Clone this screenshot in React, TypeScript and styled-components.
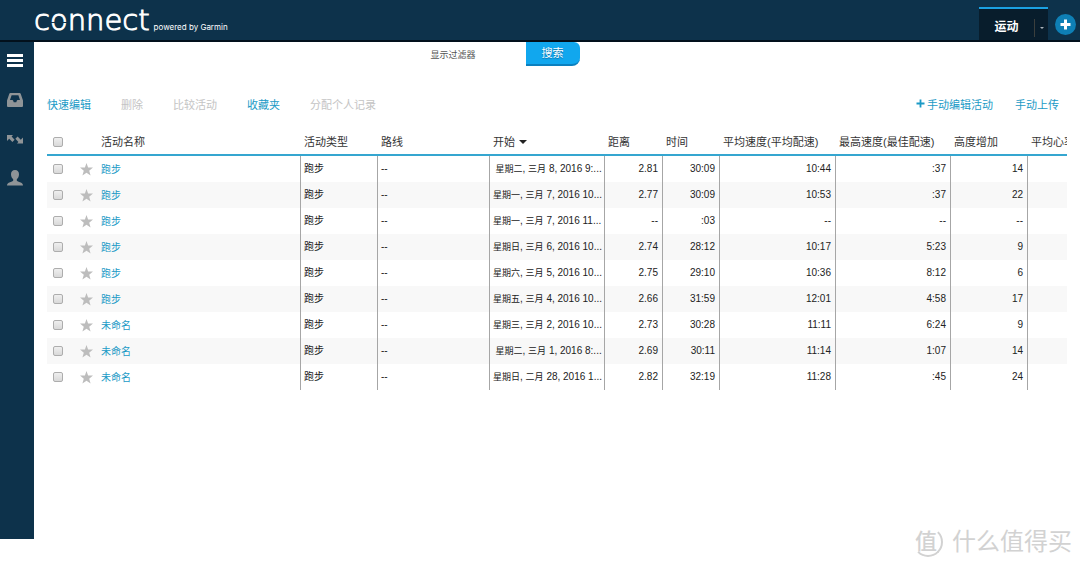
import React from 'react';
import styled, { createGlobalStyle } from 'styled-components';

const sans = '"Liberation Sans", "Noto Sans CJK SC", sans-serif';

const GlobalStyle = createGlobalStyle`
  *, *::before, *::after { box-sizing: border-box; }
  body { margin: 0; background: #fff; font-family: ${sans}; color: #222; }
  button, input { font-family: inherit; margin: 0; }
`;

const Page = styled.div`
  position: relative;
  min-height: 100vh;
  display: flex;
  flex-direction: column;
  padding-bottom: 28px;
  overflow: hidden;
`;

const TopBar = styled.header`
  display: flex;
  justify-content: space-between;
  height: 42px;
  padding: 0 4px 0 34px;
  background: #0d324b;
  border-bottom: 2px solid #02101c;
`;

const Brand = styled.a`
  display: flex;
  align-items: baseline;
  gap: 4px;
  color: #fff;
  text-decoration: none;
`;

const Wordmark = styled.span`
  position: relative;
  font: 200 29px/40px "DejaVu Sans", sans-serif;
  -webkit-text-stroke: 1px #fff;

  /* the break that splits the "o" into two arcs */
  &::after {
    content: '';
    position: absolute;
    left: 16px;
    top: 22px;
    width: 18px;
    height: 1px;
    background: #0d324b;
  }
`;

const Tagline = styled.span`
  font: 8px/12px Inter, sans-serif;
`;

const TopActions = styled.nav`
  display: flex;
  align-items: flex-end;
  gap: 7px;
`;

const Tab = styled.div`
  display: flex;
  align-items: center;
  height: 33px;
  border-top: 2px solid #1ba1e2;
  background: #081d2c;
`;

const TabButton = styled.button`
  width: 55px;
  border: 0;
  padding: 4px 0 0;
  background: none;
  color: #fff;
  font-size: 12px;
  font-weight: 700;
  line-height: 18px;
`;

const TabMenu = styled.button`
  width: 14px;
  height: 18px;
  margin-top: 6px;
  border: 0;
  border-left: 1px solid #3b3f3d;
  padding: 0;
  display: grid;
  place-items: center;
  background: none;
`;

const AddButton = styled.button`
  width: 21px;
  height: 21px;
  margin-bottom: 5px;
  border: 0;
  border-radius: 50%;
  padding: 0;
  display: grid;
  place-items: center;
  background: #0e7fb5;
`;

const Body = styled.div`
  flex: 1;
  display: flex;
`;

const Sidebar = styled.nav`
  flex: none;
  width: 34px;
  display: flex;
  flex-direction: column;
  align-items: center;
  gap: 15px;
  padding: 7px 4px 0 0;
  background: #0d324b;
`;

const SideButton = styled.button`
  width: 24px;
  height: 24px;
  border: 0;
  padding: 0;
  display: grid;
  place-items: center;
  background: none;
`;

const Main = styled.main`
  flex: 1;
  min-width: 0;
  padding: 0 13px;
`;

const SearchRow = styled.div`
  display: flex;
  justify-content: center;
  align-items: flex-start;
  gap: 50px;
  padding-right: 104px;
`;

const FilterToggle = styled.button`
  border: 0;
  padding: 0;
  background: none;
  color: #555;
  font-size: 9px;
  line-height: 26px;
`;

const SearchButton = styled.button`
  width: 54px;
  height: 24px;
  border: 0;
  border-bottom: 2px solid #0b80bf;
  border-radius: 0 6px 8px 0;
  padding: 0;
  background: #11a7ee;
  color: #fff;
  font-size: 11px;
  line-height: 22px;
  text-shadow: 0 1px 1px #0b6fa6;
`;

const Toolbar = styled.div`
  display: flex;
  justify-content: space-between;
  margin-top: 28px;
  padding-right: 8px;
`;

const ToolGroup = styled.div<{ $gap: number }>`
  display: flex;
  gap: ${(p) => p.$gap}px;
`;

const ToolButton = styled.button`
  display: flex;
  align-items: center;
  gap: 2px;
  border: 0;
  padding: 0;
  background: none;
  color: #1b9ac6;
  font-size: 11px;
  line-height: 18px;
  &:disabled { color: #c4c4c4; }
`;

const Table = styled.table`
  width: 100%;
  margin-top: 15px;
  border-collapse: separate;
  border-spacing: 0;
  table-layout: fixed;
`;

const Col = styled.col<{ $width?: number }>`
  width: ${(p) => (p.$width ? `${p.$width}px` : 'auto')};
`;

const HeadCell = styled.th`
  height: 27px;
  padding: 0 0 0 3px;
  border-bottom: 2px solid #35a6d0;
  overflow: hidden;
  color: #333;
  font-size: 11px;
  font-weight: 400;
  line-height: 22px;
  text-align: left;
  white-space: nowrap;
`;

const SortButton = styled.button`
  display: flex;
  align-items: center;
  gap: 4px;
  border: 0;
  padding: 0;
  background: none;
  color: inherit;
  font-size: 11px;
  line-height: 22px;
`;

const Row = styled.tr`
  &:nth-child(even) { background: #f8f8f8; }
`;

const Cell = styled.td<{ $align?: 'left' | 'right'; $ruled?: boolean }>`
  height: 26px;
  padding: 0 4px 0 3px;
  border-right: ${(p) => (p.$ruled === false ? '0' : '1px solid #a6a6a6')};
  overflow: hidden;
  font-size: 10px;
  line-height: 26px;
  text-align: ${(p) => p.$align ?? 'left'};
  white-space: nowrap;
`;

const DateCell = styled(Cell)`
  padding-right: 0;
`;

const DateWord = styled.span`
  font-size: 9px;
`;

const NameLink = styled.a`
  position: relative;
  top: 1px;
  color: #1b9ac6;
  text-decoration: none;
`;

const Check = styled.input`
  appearance: none;
  display: block;
  width: 10px;
  height: 10px;
  margin-left: 3px;
  border: 1px solid #adadad;
  border-radius: 2px;
  background: linear-gradient(#efefef, #d9d9d9);
  &:checked { background: #1b9ac6; }
`;

const StarButton = styled.button`
  display: block;
  border: 0;
  padding: 0;
  background: none;
  line-height: 0;
`;

const Watermark = styled.div`
  position: absolute;
  right: 8px;
  bottom: 8px;
  display: flex;
  align-items: center;
  gap: 9px;
  color: #d2d2d2;
  font-size: 24px;
  line-height: 34px;
`;

const Seal = styled.span`
  width: 30px;
  height: 30px;
  display: grid;
  align-items: center;
  justify-items: start;
  border: 2px solid #d2d2d2;
  border-color: transparent #d2d2d2 #d2d2d2 transparent;
  border-radius: 50%;
  font-size: 22px;
  font-weight: 500;
  line-height: 26px;
`;

const Star = () => (
  <svg width="13" height="13" viewBox="0 0 13 13" aria-hidden="true">
    <path fill="#bdbdbd" d="M6.5 0 8.1 4.4 13 4.6 9.2 7.7 10.6 12.6 6.5 9.800 2.400 12.600 3.800 7.700 0 4.600 4.900 4.400Z" />
  </svg>
);

interface Activity {
  name: string;
  day: string;
  month: string;
  rest: string;
  values: string[];
}

const activities: Activity[] = [
  { name: '跑步', day: '\u00a0星期二', month: '三月', rest: '8, 2016 9:...', values: ['2.81', '30:09', '10:44', ':37', '14'] },
  { name: '跑步', day: '星期一', month: '三月', rest: '7, 2016 10...', values: ['2.77', '30:09', '10:53', ':37', '22'] },
  { name: '跑步', day: '星期一', month: '三月', rest: '7, 2016 11...', values: ['--', ':03', '--', '--', '--'] },
  { name: '跑步', day: '星期日', month: '三月', rest: '6, 2016 10...', values: ['2.74', '28:12', '10:17', '5:23', '9'] },
  { name: '跑步', day: '星期六', month: '三月', rest: '5, 2016 10...', values: ['2.75', '29:10', '10:36', '8:12', '6'] },
  { name: '跑步', day: '星期五', month: '三月', rest: '4, 2016 10...', values: ['2.66', '31:59', '12:01', '4:58', '17'] },
  { name: '未命名', day: '星期三', month: '三月', rest: '2, 2016 10...', values: ['2.73', '30:28', '11:11', '6:24', '9'] },
  { name: '未命名', day: '\u00a0星期二', month: '三月', rest: '1, 2016 8:...', values: ['2.69', '30:11', '11:14', '1:07', '14'] },
  { name: '未命名', day: '星期日', month: '二月', rest: '28, 2016 1...', values: ['2.82', '32:19', '11:28', ':45', '24'] },
];

const columnWidths = [30, 21, undefined, 77, 112, 115, 58, 57, 116, 115, 77, 39];

export default function App() {
  return (
    <>
      <GlobalStyle />
      <Page>
        <TopBar>
          <Brand href="#">
            <Wordmark>connect</Wordmark>
            <Tagline>powered by Garmin</Tagline>
          </Brand>
          <TopActions>
            <Tab>
              <TabButton>运动</TabButton>
              <TabMenu aria-label="展开">
                <svg width="4" height="2" viewBox="0 0 4 2"><path d="M0 0h4L2 2z" fill="#a9b3ba" /></svg>
              </TabMenu>
            </Tab>
            <AddButton aria-label="添加">
              <svg width="11" height="11" viewBox="0 0 11 11"><path d="M5.5 .5v10M.5 5.5h10" stroke="#fff" strokeWidth="3" /></svg>
            </AddButton>
          </TopActions>
        </TopBar>
        <Body>
          <Sidebar>
            <SideButton aria-label="菜单">
              <svg width="16" height="14" viewBox="0 0 16 14"><path d="M0 1.5h16M0 6.5h16M0 11.5h16" stroke="#fff" strokeWidth="3" /></svg>
            </SideButton>
            <SideButton aria-label="收件箱">
              <svg width="16" height="14" viewBox="0 0 16 14">
                <path fillRule="evenodd" fill="#8f9497" d="M3.4 0h9.2Q13.4 0 13.7.8L16 7.500v5.500q0 1-1 1H1q-1 0-1-1V7.500L2.300.8Q2.600 0 3.400 0ZM4.600 2.200 3 7h2.300q.7 0 .9.7l.5 1.500h2.600l.5-1.500q.2-.7.9-.7H13L11.400 2.200Z" />
              </svg>
            </SideButton>
            <SideButton aria-label="连接">
              <svg width="16" height="9" viewBox="0 0 16 9">
                <path fill="#8f9497" d="M0 0h6L4.600 1.500 7.600 4.700 5.400 7 2.200 3.800 0 6ZM16 8.500h-6l1.400-1.500L8.400 3.800l2.200-2.300 3.200 3.200L16 2.500Z" />
              </svg>
            </SideButton>
            <SideButton aria-label="个人资料">
              <svg width="16" height="16" viewBox="0 0 16 16">
                <path fill="#8f9497" d="M8 0c2.600 0 4 1.700 4 4.300 0 2.200-.9 4-2.200 5v1.200c0 .6 1.200.9 3.200 1.700 2 .7 2.800 1.500 3 3.300H0c.2-1.800 1-2.600 3-3.300 2-.8 3.200-1.100 3.200-1.700V9.300C4.900 8.300 4 6.500 4 4.300 4 1.700 5.400 0 8 0Z" />
              </svg>
            </SideButton>
          </Sidebar>
          <Main>
            <SearchRow>
              <FilterToggle>显示过滤器</FilterToggle>
              <SearchButton>搜索</SearchButton>
            </SearchRow>
            <Toolbar>
              <ToolGroup $gap={30}>
                <ToolButton>快速编辑</ToolButton>
                <ToolButton disabled>删除</ToolButton>
                <ToolButton disabled>比较活动</ToolButton>
                <ToolButton>收藏夹</ToolButton>
                <ToolButton disabled>分配个人记录</ToolButton>
              </ToolGroup>
              <ToolGroup $gap={22}>
                <ToolButton>
                  <svg width="9" height="12" viewBox="0 0 9 12"><path d="M4.500 .5v8M.5 4.500h8" stroke="#1b9ac6" strokeWidth="1.800" /></svg>
                  手动编辑活动
                </ToolButton>
                <ToolButton>手动上传</ToolButton>
              </ToolGroup>
            </Toolbar>
            <Table>
              <colgroup>
                {columnWidths.map((w, i) => <Col key={i} $width={w} />)}
              </colgroup>
              <thead>
                <tr>
                  <HeadCell><Check type="checkbox" aria-label="全选" /></HeadCell>
                  <HeadCell aria-label="收藏" />
                  <HeadCell>活动名称</HeadCell>
                  <HeadCell>活动类型</HeadCell>
                  <HeadCell>路线</HeadCell>
                  <HeadCell>
                    <SortButton>
                      开始
                      <svg width="8" height="4" viewBox="0 0 8 4"><path d="M0 0h8L4 4z" fill="#222" /></svg>
                    </SortButton>
                  </HeadCell>
                  <HeadCell>距离</HeadCell>
                  <HeadCell>时间</HeadCell>
                  <HeadCell>平均速度(平均配速)</HeadCell>
                  <HeadCell>最高速度(最佳配速)</HeadCell>
                  <HeadCell>高度增加</HeadCell>
                  <HeadCell>平均心率</HeadCell>
                </tr>
              </thead>
              <tbody>
                {activities.map(({ name, day, month, rest, values }, i) => (
                  <Row key={i}>
                    <Cell $ruled={false}><Check type="checkbox" aria-label={`选择 ${name}`} /></Cell>
                    <Cell $ruled={false}><StarButton aria-label="收藏"><Star /></StarButton></Cell>
                    <Cell><NameLink href="#">{name}</NameLink></Cell>
                    <Cell>跑步</Cell>
                    <Cell>--</Cell>
                    <DateCell>
                      <DateWord>{day}</DateWord>, <DateWord>{month}</DateWord> {rest}
                    </DateCell>
                    {values.map((v, j) => <Cell key={j} $align="right">{v}</Cell>)}
                    <Cell $ruled={false} />
                  </Row>
                ))}
              </tbody>
            </Table>
          </Main>
        </Body>
        <Watermark>
          <Seal>值</Seal>
          <span>什么值得买</span>
        </Watermark>
      </Page>
    </>
  );
}
